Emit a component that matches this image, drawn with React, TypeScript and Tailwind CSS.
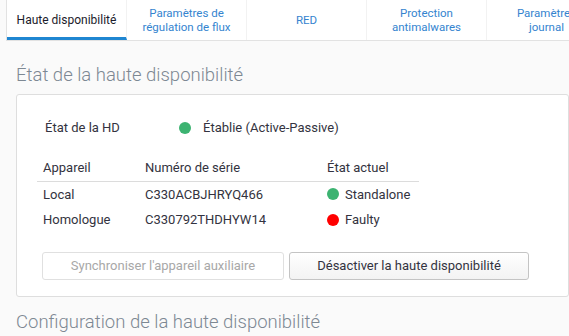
const tabs = [
  { label: "Haute disponibilité", active: true },
  { label: "Paramètres de régulation de flux" },
  { label: "RED" },
  { label: "Protection antimalwares" },
  { label: "Paramètres journal" },
];

const devices = [
  { name: "Local", serial: "C330ACBJHRYQ466", state: "Standalone", color: "bg-[#3cb371]" },
  { name: "Homologue", serial: "C330792THDHYW14", state: "Faulty", color: "bg-[#ff0000]" },
];

function Dot({ color }: { color: string }) {
  return <span className={`inline-block w-3 h-3 rounded-full ${color}`} />;
}

export default function App() {
  return (
    <div
      className="w-[569px] h-[336px] overflow-hidden bg-[#fafafa] text-[#333340]"
      style={{ fontFamily: "Roboto, 'Noto Sans', sans-serif" }}
    >
      <div className="ml-[6px] flex h-[41px] bg-white border-l border-b border-[#e2e2e2]">
        {tabs.map((t) => (
          <div
            key={t.label}
            className={`w-[120px] shrink-0 flex items-center justify-center text-center leading-[14px] border-r border-[#f2f2f2] ${
              t.active
                ? "px-1 whitespace-nowrap text-[12px] text-[#1b1b2b] border-b-[3px] border-b-[#1f86d1] pt-[3px]"
                : "px-3 text-[11.5px] text-[#3484cf]"
            }`}
          >
            {t.label}
          </div>
        ))}
      </div>

      <div className="pl-4">
        <h2 className="mt-[22px] text-[18.5px] leading-[24px] text-[#7d8893] font-light">
          État de la haute disponibilité
        </h2>
        <div className="mt-[7px] h-[203px] bg-white border border-[#dedede] rounded-[3px] pt-[24px]">
          <div className="flex items-center text-[13px] h-[18px]">
            <span className="ml-[28px] w-[134px]">État de la HD</span>
            <Dot color="bg-[#3cb371]" />
            <span className="ml-3">Établie (Active-Passive)</span>
          </div>

          <table className="ml-5 mt-[18px] text-[13px] border-collapse">
            <thead>
              <tr className="border-b border-[#dcdcdc] h-[26px]">
                <th className="w-[102px] text-left font-normal pl-[6px]">Appareil</th>
                <th className="w-[182px] text-left font-normal pl-[6px]">Numéro de série</th>
                <th className="w-[98px] text-left font-normal pl-[6px]">État actuel</th>
              </tr>
            </thead>
            <tbody>
              {devices.map((d) => (
                <tr key={d.name} className="h-[26px]">
                  <td className="pl-[6px]">{d.name}</td>
                  <td className="pl-[6px]">{d.serial}</td>
                  <td className="pl-[6px]">
                    <span className="flex items-center gap-[6px]">
                      <Dot color={d.color} />
                      {d.state}
                    </span>
                  </td>
                </tr>
              ))}
            </tbody>
          </table>

          <div className="flex gap-[5px] ml-[25px] mt-[19px]">
            <button className="w-[242px] h-[28px] rounded-[3px] border border-[#e0e0e0] bg-white text-[13px] text-[#a8a8a8]">
              Synchroniser l'appareil auxiliaire
            </button>
            <button className="w-[240px] h-[28px] rounded-[3px] border border-[#c4c4c4] bg-gradient-to-b from-white to-[#f3f3f3] text-[13px] text-[#33333f]">
              Désactiver la haute disponibilité
            </button>
          </div>
        </div>

        <h2 className="mt-[13px] text-[18.5px] leading-[24px] text-[#7d8893] font-light">
          Configuration de la haute disponibilité
        </h2>
      </div>
    </div>
  );
}
